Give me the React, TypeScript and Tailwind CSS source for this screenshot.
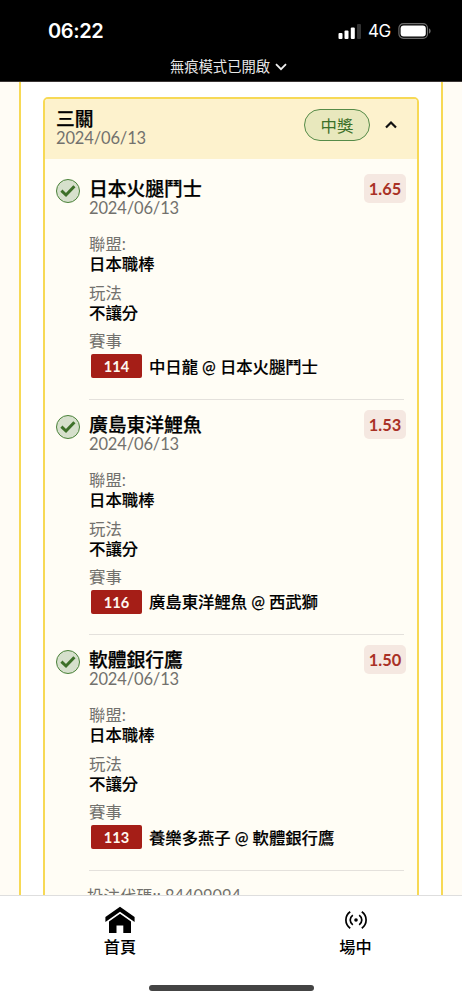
interface Leg {
  team: string;
  date: string;
  odds: string;
  league: string;
  play: string;
  code: string;
  match: string;
}

const legs: Leg[] = [
  { team: "日本火腿鬥士", date: "2024/06/13", odds: "1.65", league: "日本職棒", play: "不讓分", code: "114", match: "中日龍 @ 日本火腿鬥士" },
  { team: "廣島東洋鯉魚", date: "2024/06/13", odds: "1.53", league: "日本職棒", play: "不讓分", code: "116", match: "廣島東洋鯉魚 @ 西武獅" },
  { team: "軟體銀行鷹", date: "2024/06/13", odds: "1.50", league: "日本職棒", play: "不讓分", code: "113", match: "養樂多燕子 @ 軟體銀行鷹" },
];

const StatusBar = () => (
  <header className="h-[82px] shrink-0 border-b border-[#3a3535] bg-black text-white">
    <div className="flex h-[55px] items-start justify-between pt-[19px] pr-[31px] pl-12">
      <span className="font-['Inter','Liberation_Sans',sans-serif] text-[20px] leading-6 font-semibold tracking-[-0.4px]">06:22</span>
      <div className="flex h-6 items-center">
        <svg width="24" height="15" viewBox="0 0 24 15" fill="#fff">
          <rect x="0.5" y="9" width="4" height="6" rx="1" />
          <rect x="6.5" y="6.5" width="4" height="8.5" rx="1" />
          <rect x="12.8" y="3.5" width="4" height="11.5" rx="1" />
          <rect x="19" y="0" width="4" height="15" rx="1" fill="#333" />
        </svg>
        <span className="ml-[6px] w-[23px] font-['Inter','Liberation_Sans',sans-serif] text-[17px] leading-6 tracking-[-0.4px]">4G</span>
        <svg className="ml-[7px]" width="33" height="16" viewBox="0 0 33 16">
          <rect x="0.9" y="0.7" width="28.6" height="14.6" rx="4.5" fill="none" stroke="#6b6b6b" strokeWidth="1.2" />
          <rect x="2.6" y="2.4" width="25.2" height="11.2" rx="3" fill="#fff" />
          <path d="M31 5.3q1.7 1 1.7 2.7T31 10.7z" fill="#6b6b6b" />
        </svg>
      </div>
    </div>
    <div className="flex items-center justify-center pr-[5px] text-[#e8e8e8]">
      <span className="text-[14.3px] leading-6">無痕模式已開啟</span>
      <svg className="ml-[5px]" width="12" height="8" viewBox="0 0 12 8" fill="none" stroke="#eee" strokeWidth="1.8">
        <path d="M1 1.2l5 5 5-5" />
      </svg>
    </div>
  </header>
);

const LegRow = ({ leg }: { leg: Leg }) => (
  <div className="flex h-[235.5px] pl-[10.5px]">
    <div className="mt-[15px] flex size-[24px] shrink-0 items-center justify-center rounded-full border border-[#4a8239] bg-[#d6e0cc]">
      <svg width="16" height="14" viewBox="0 0 16 14" fill="none" stroke="#3d7029" strokeWidth="3">
        <path d="M1.4 6.6L6 11 14.4 2.2" />
      </svg>
    </div>
    <div className="mr-[13px] ml-[9.5px] flex-1 border-b border-[#e4e1dc] pt-[15px] text-[16.4px] leading-5 whitespace-nowrap">
      <div className="flex h-10 justify-between">
        <div>
          <h3 className="text-[18.8px] leading-5 font-medium text-black [-webkit-text-stroke:0.25px_#000]">{leg.team}</h3>
          <p className="-mt-px text-[16.5px] tracking-[-0.15px] text-[#72716d]">{leg.date}</p>
        </div>
        <span className="-mt-[5px] -mr-[2px] h-[29px] w-[42px] rounded-[5px] bg-[#f5e8e1] text-center text-[16.4px] leading-[30px] font-bold text-[#a93125]">
          {leg.odds}
        </span>
      </div>
      <div className="mt-[15px] h-[49px]">
        <p className="text-[#72716d]">聯盟:</p>
        <p className="font-medium text-black [-webkit-text-stroke:0.15px_#000]">{leg.league}</p>
      </div>
      <div className="h-[48px]">
        <p className="text-[#72716d]">玩法</p>
        <p className="font-medium text-black [-webkit-text-stroke:0.15px_#000]">{leg.play}</p>
      </div>
      <p className="text-[#72716d]">賽事</p>
      <div className="mt-[3px] flex items-center">
        <span className="ml-[2px] h-6 w-[51px] rounded-[2px] bg-[#a51e17] text-center text-[14.6px] leading-[25px] font-bold text-[#fff8f0]">
          {leg.code}
        </span>
        <span className="mt-px ml-[7px] font-medium tracking-[-0.05px] text-black [-webkit-text-stroke:0.15px_#000]">{leg.match}</span>
      </div>
    </div>
  </div>
);

const BottomNav = () => (
  <nav className="h-[105px] shrink-0 border-t border-[#dedede] bg-white">
    <div className="flex h-[83px] pl-[2px] text-[16.2px] leading-5 font-medium text-black">
      <a className="flex w-[236px] shrink-0 flex-col items-center pt-[10px]">
        <svg width="30" height="28" viewBox="0 0 30 28" fill="#000">
          <path d="M15 .8L29.6 11v5L15 5.8.4 16v-5z" />
          <path d="M15 7.8L26 15.5V27h-7.7v-7.4h-6.8V27H4V15.5z" />
        </svg>
        <span className="mt-[3px]">首頁</span>
      </a>
      <a className="flex w-[235px] shrink-0 flex-col items-center pt-[10px]">
        <svg width="24" height="28" viewBox="0 0 24 28" fill="none" stroke="#000" strokeWidth="1.7">
          <path d="M6.2 5.8Q1.9 9 1.9 14t4.3 8.2M17.8 5.8Q22.1 9 22.1 14t-4.3 8.2" />
          <path d="M8.8 9.2Q6.2 11.2 6.2 14t2.6 4.8M15.2 9.2q2.6 2 2.6 4.8t-2.6 4.8" />
          <circle cx="12" cy="14" r="1.8" fill="#000" stroke="none" />
        </svg>
        <span className="mt-[3px]">場中</span>
      </a>
    </div>
    <div className="mx-auto mt-[6px] h-[6px] w-[165px] rounded-full bg-[#444]" />
  </nav>
);

const App = () => {
  return (
    <div className="flex h-[1000px] w-[462px] flex-col overflow-hidden bg-[#fffcf5] font-['Lato','Noto_Sans_CJK_TC',sans-serif]">
      <StatusBar />
      <main className="mr-[19px] ml-[19px] min-h-0 flex-1 overflow-hidden border-x-2 border-[#f7d955] bg-white px-[22px] pt-[15px]">
        <section className="h-[900px] overflow-hidden rounded-[5px] border-2 border-[#f7d955] bg-[#fffdf5]">
          <div className="flex h-[60px] justify-between bg-[#fdf2cd] pr-[20px] pl-[11px]">
            <div className="pt-[10px]">
              <h2 className="text-[18.8px] leading-5 font-medium text-black [-webkit-text-stroke:0.25px_#000]">三關</h2>
              <p className="-mt-px text-[16.5px] leading-5 tracking-[-0.15px] text-[#72716d]">2024/06/13</p>
            </div>
            <div className="flex items-start pt-[10px]">
              <span className="h-[32px] w-[66px] rounded-full border-[1.5px] border-[#568b48] bg-[#e8e8bd] text-center text-[16.4px] leading-[31px] text-[#3d7029]">
                中獎
              </span>
              <svg className="mt-[11px] ml-[15px]" width="12" height="9" viewBox="0 0 12 9" fill="none" stroke="#111" strokeWidth="2.2">
                <path d="M1 7.5l5-5 5 5" />
              </svg>
            </div>
          </div>
          <div className="pt-[5px]">
            {legs.map((leg) => (
              <LegRow key={leg.code} leg={leg} />
            ))}
          </div>
          <p className="pt-[15px] pl-[42px] text-[16.4px] leading-5 text-[#72716d]">投注代碼:: 84409094</p>
        </section>
      </main>
      <BottomNav />
    </div>
  );
};

export default App;
